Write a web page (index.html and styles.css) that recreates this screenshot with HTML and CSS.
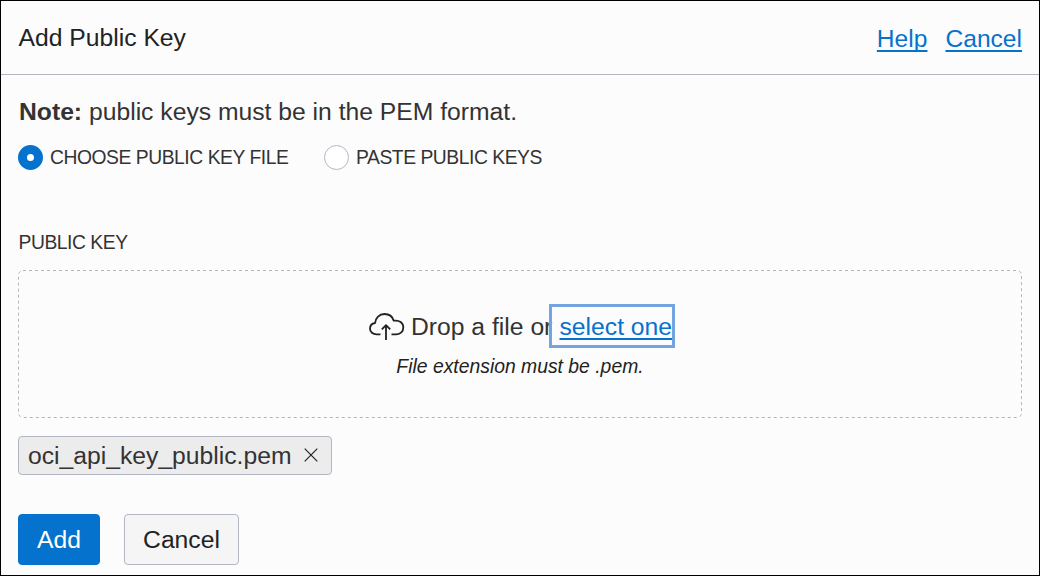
FILE: index.html
```
<!DOCTYPE html>
<html lang="en">
<head>
<meta charset="utf-8">
<title>Add Public Key</title>
<link rel="stylesheet" href="styles.css">
</head>
<body>
<div class="dialog">
  <header class="header">
    <h1 class="title">Add Public Key</h1>
    <nav class="links"><a class="link" href="#">Help</a><a class="link" href="#">Cancel</a></nav>
  </header>
  <main class="content">
    <p class="note"><strong>Note:</strong> public keys must be in the PEM format.</p>
    <div class="radios">
      <div class="option"><span class="radio radio-on"></span><span class="label label-choose">CHOOSE PUBLIC KEY FILE</span></div>
      <div class="option"><span class="radio"></span><span class="label label-paste">PASTE PUBLIC KEYS</span></div>
    </div>
    <div class="label field-label">PUBLIC KEY</div>
    <div class="dropzone">
      <svg class="dash" width="1004" height="148"><rect x=".5" y=".5" width="1003" height="147" rx="4.5" fill="none" stroke="#b5b5bb" stroke-dasharray="3 3"/></svg>
      <div class="drop-line">
        <svg class="cloud" width="36" height="28" viewBox="0 0 36 28" fill="none" stroke="#222" stroke-width="1.8" stroke-linecap="butt" stroke-linejoin="round"><path d="M11.500 21.300H7.500C3.900 21.300 1 18.900 1 15.700C1 12.500 3.200 10.400 6.100 10C6.600 5 10.200 1 15.500 1C19.800 1 23.500 3.500 24.700 7.700C30.500 6.800 34.300 10 34.300 14.500C34.300 18.500 31.400 21.300 27.500 21.300H22.500M17 27V12.300M12.800 16.300L17 12.100L21.200 16.300"/></svg>
        <span class="drop-text">Drop a file or</span><a class="link select" href="#"><span>select one</span></a>
      </div>
      <p class="hint">File extension must be .pem.</p>
    </div>
    <div class="chip"><span class="chip-text">oci_api_key_public.pem</span><svg class="close" width="14" height="14" viewBox="0 0 14 14" stroke="#222" stroke-width="1.2"><path d="M.7.7L13.300 13.300M13.300.7L.7 13.300"/></svg></div>
    <div class="actions"><button class="button primary">Add</button><button class="button">Cancel</button></div>
  </main>
</div>
</body>
</html>
```
FILE: styles.css
```
* { box-sizing: border-box; }
body { margin: 0; }
.dialog {
  width: 1040px;
  height: 576px;
  overflow: hidden;
  border: 1px solid #000;
  background: #fcfcfc;
  color: #333;
  font: 24.7px/28px "Liberation Sans", Arial, sans-serif;
}
.header {
  display: flex;
  align-items: center;
  justify-content: space-between;
  height: 74px;
  padding: 0 17px 0 17.5px;
  border-bottom: 1px solid #b3b7c4;
}
.title { margin: 0; font-size: inherit; font-weight: 400; color: #222; }
.links { display: flex; gap: 18px; padding-top: 2px; font-size: 24.6px; }
.link {
  color: #0572ce;
  text-decoration: underline;
  text-decoration-thickness: 2px;
  text-underline-offset: 3px;
  text-decoration-skip-ink: none;
}
.content { padding: 23px 17px 0; }
.note { margin: 0; padding-left: 1px; }
.radios { display: flex; gap: 35px; margin-top: 19px; }
.option { display: flex; align-items: center; gap: 7px; height: 25px; }
.radio {
  width: 25px;
  height: 25px;
  border: 1px solid #b3b7c4;
  border-radius: 50%;
  background: #fff;
}
.radio-on { border: 9px solid #0572ce; }
.label { font-size: 19.3px; line-height: 22px; letter-spacing: -0.45px; white-space: nowrap; }
.label-choose { width: 239px; }
.field-label { margin-top: 62px; padding-left: 0.5px; }
.dropzone {
  position: relative;
  display: flex;
  flex-direction: column;
  align-items: center;
  height: 148px;
  margin-top: 16px;
  padding-top: 34px;
}
.dash { position: absolute; top: 0; left: 0; }
.drop-line { display: flex; align-items: center; height: 44px; padding-left: 4px; }
.cloud { margin: 2px 6px 0 0; }
.drop-text { width: 138px; padding-top: 2px; white-space: nowrap; }
.select {
  width: 126px;
  height: 44px;
  padding: 6px 0 0 7.5px;
  border: 3px solid #74a4df;
  white-space: nowrap;
}
.hint { margin: 7px 0 0; color: #222; font-size: 19.35px; line-height: 22px; font-style: italic; }
.chip {
  display: flex;
  align-items: center;
  width: 314px;
  height: 39px;
  margin-top: 18px;
  padding-left: 9px;
  border: 1px solid #b3b7c4;
  border-radius: 4px;
  background: #ececec;
}
.chip-text { margin-right: 12.5px; }
.close { margin-bottom: 2px; }
.actions { display: flex; gap: 24px; margin-top: 39px; }
.button {
  width: 115px;
  height: 51px;
  padding: 0;
  border: 1px solid #b3b7c4;
  border-radius: 4px;
  background: #f5f5f5;
  color: #222;
  font: inherit;
}
.primary { width: 82px; border-color: #0572ce; background: #0572ce; color: #fff; }
```
